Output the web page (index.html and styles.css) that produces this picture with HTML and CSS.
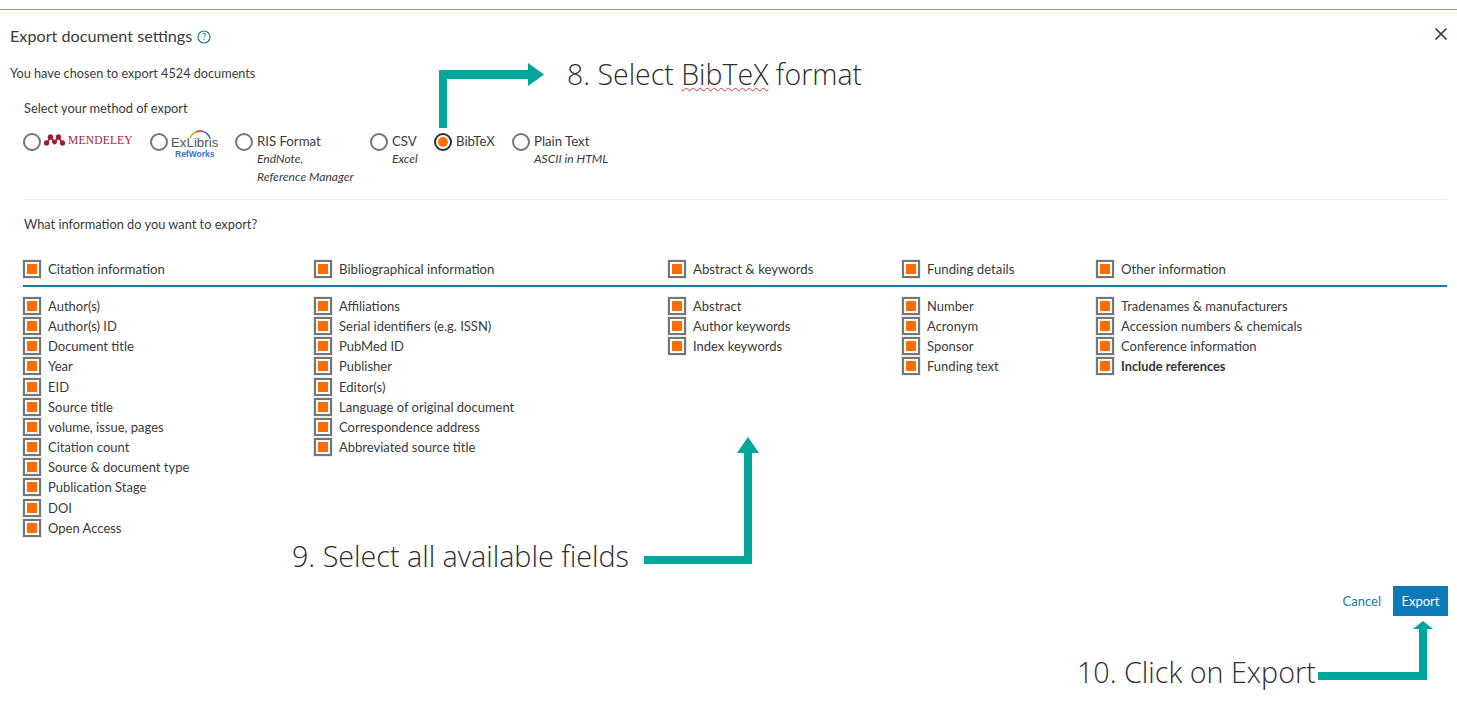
FILE: index.html
```html
<!DOCTYPE html>
<html lang="en">
<head>
<meta charset="utf-8">
<title>Export document settings</title>
<link rel="stylesheet" href="styles.css">
</head>
<body>
<div class="topline"></div>
<main class="dialog">
  <header class="head">
    <h1 class="title">Export document settings</h1>
    <svg class="help" width="14" height="14" viewBox="0 0 14 14"><circle cx="7" cy="7" r="6" fill="none" stroke="#1a7fa5" stroke-width="1.2"/><text x="7" y="10.2" text-anchor="middle" class="help-q">?</text></svg>
    <svg class="close" width="14" height="14" viewBox="0 0 14 14"><path d="M1.500 1.500L12.500 12.500M12.500 1.500L1.500 12.500" stroke="#2e3a4a" stroke-width="1.7" fill="none"/></svg>
  </header>
  <p class="count">You have chosen to export 4524 documents</p>
  <section class="method">
    <p class="label">Select your method of export</p>
    <div class="radios">
      <div class="radio r-men">
        <span class="dot"></span>
        <span class="men-logo">
          <svg width="21" height="12" viewBox="0 0 21 12"><g fill="#9b1c2e" stroke="#9b1c2e"><path d="M2.500 9L6.500 3.500L10.500 8L14.500 3.500L18.500 9" fill="none" stroke-width="1.6"/><circle cx="2.500" cy="9" r="2.300"/><circle cx="6.500" cy="3" r="2.300"/><circle cx="10.500" cy="8" r="2"/><circle cx="14.500" cy="3" r="2.300"/><circle cx="18.500" cy="9" r="2.300"/></g></svg>
          <span class="men-text">MENDELEY</span>
        </span>
      </div>
      <div class="radio r-ex">
        <span class="dot"></span>
        <span class="ex-logo">
          <svg class="arc" width="24" height="9" viewBox="0 0 24 9"><path d="M2 8A10 10 0 0 1 8 2" stroke="#e2a21f" stroke-width="1.5" fill="none"/><path d="M8 2A10 10 0 0 1 13 1" stroke="#d8352a" stroke-width="1.5" fill="none"/><path d="M13 1A10 10 0 0 1 18 3" stroke="#7a3fa0" stroke-width="1.5" fill="none"/><path d="M18 3A10 10 0 0 1 22 8" stroke="#2a6fd0" stroke-width="1.5" fill="none"/></svg>
          <span class="ex-text">ExLibris</span>
          <span class="ex-sub">RefWorks</span>
        </span>
      </div>
      <div class="radio r-ris">
        <span class="dot"></span>
        <span class="opt">RIS Format<em>EndNote,<br>Reference Manager</em></span>
      </div>
      <div class="radio r-csv">
        <span class="dot"></span>
        <span class="opt">CSV<em>Excel</em></span>
      </div>
      <div class="radio r-bib">
        <span class="dot on"></span>
        <span class="opt">BibTeX</span>
      </div>
      <div class="radio r-txt">
        <span class="dot"></span>
        <span class="opt">Plain Text<em>ASCII in HTML</em></span>
      </div>
    </div>
  </section>
  <section class="fields">
    <p class="label">What information do you want to export?</p>
    <div class="grid heads">
      <div class="item"><span class="box"></span>Citation information</div>
      <div class="item"><span class="box"></span>Bibliographical information</div>
      <div class="item"><span class="box"></span>Abstract &amp; keywords</div>
      <div class="item"><span class="box"></span>Funding details</div>
      <div class="item"><span class="box"></span>Other information</div>
    </div>
    <div class="grid lists">
      <ul class="col">
        <li class="item"><span class="box"></span>Author(s)</li>
        <li class="item"><span class="box"></span>Author(s) ID</li>
        <li class="item"><span class="box"></span>Document title</li>
        <li class="item"><span class="box"></span>Year</li>
        <li class="item"><span class="box"></span>EID</li>
        <li class="item"><span class="box"></span>Source title</li>
        <li class="item"><span class="box"></span>volume, issue, pages</li>
        <li class="item"><span class="box"></span>Citation count</li>
        <li class="item"><span class="box"></span>Source &amp; document type</li>
        <li class="item"><span class="box"></span>Publication Stage</li>
        <li class="item"><span class="box"></span>DOI</li>
        <li class="item"><span class="box"></span>Open Access</li>
      </ul>
      <ul class="col">
        <li class="item"><span class="box"></span>Affiliations</li>
        <li class="item"><span class="box"></span>Serial identifiers (e.g. ISSN)</li>
        <li class="item"><span class="box"></span>PubMed ID</li>
        <li class="item"><span class="box"></span>Publisher</li>
        <li class="item"><span class="box"></span>Editor(s)</li>
        <li class="item"><span class="box"></span>Language of original document</li>
        <li class="item"><span class="box"></span>Correspondence address</li>
        <li class="item"><span class="box"></span>Abbreviated source title</li>
      </ul>
      <ul class="col">
        <li class="item"><span class="box"></span>Abstract</li>
        <li class="item"><span class="box"></span>Author keywords</li>
        <li class="item"><span class="box"></span>Index keywords</li>
      </ul>
      <ul class="col">
        <li class="item"><span class="box"></span>Number</li>
        <li class="item"><span class="box"></span>Acronym</li>
        <li class="item"><span class="box"></span>Sponsor</li>
        <li class="item"><span class="box"></span>Funding text</li>
      </ul>
      <ul class="col">
        <li class="item"><span class="box"></span>Tradenames &amp; manufacturers</li>
        <li class="item"><span class="box"></span>Accession numbers &amp; chemicals</li>
        <li class="item"><span class="box"></span>Conference information</li>
        <li class="item strong"><span class="box"></span>Include references</li>
      </ul>
    </div>
  </section>
  <footer class="actions">
    <a class="cancel">Cancel</a>
    <button class="export">Export</button>
  </footer>
</main>

<div class="callout c8">8. Select <span class="spell">BibTeX</span> format</div>
<div class="callout c9">9. Select all available fields</div>
<div class="callout c10">10. Click on Export</div>

<svg class="arrows" width="1457" height="707" viewBox="0 0 1457 707">
  <g fill="#00a59b">
    <path d="M439 128V70H528V63L544 74.500L528 86V79H447V128Z"/>
    <path d="M644 556H744V453H737L748 437L759 453H752V564H644Z"/>
    <path d="M1318 672H1419V629H1413L1423 621L1433 629H1427V680H1318Z"/>
  </g>
</svg>
</body>
</html>
```
FILE: styles.css
```css
* { box-sizing: border-box; }
html, body { margin: 0; padding: 0; }
body {
  width: 1457px;
  height: 707px;
  overflow: hidden;
  background: #fff;
  color: #3a3a3a;
  font-family: "Lato", "Open Sans", sans-serif;
  font-size: 13px;
  position: relative;
}
p, h1, ul { margin: 0; padding: 0; }
ul { list-style: none; }

.topline { height: 1px; margin-top: 9px; background: #e88440; }

.dialog { padding: 0 10px; }

.head { display: flex; align-items: center; height: 40px; gap: 5px; padding-top: 11px; }
.title { font-size: 16.200px; font-weight: 400; color: #3a3a3a; line-height: 26px; }
.help { margin-top: 2px; }
.help-q { font-size: 10px; fill: #1a7fa5; font-family: "Lato", sans-serif; }
.close { margin-left: auto; margin-right: -1px; margin-top: -4px; }

.count { margin-top: 13px; line-height: 20px; font-size: 12.700px; }

.method { margin-left: 14px; margin-top: 15px; height: 102px; border-bottom: 1px solid #ececec; }
.label { line-height: 20px; font-size: 12.800px; }

.radios { display: flex; margin-top: 13px; margin-left: -1px; }
.radio { display: flex; align-items: flex-start; }
.dot {
  width: 18px; height: 18px; flex: none;
  border: 2px solid #757575; border-radius: 50%;
  background: #fff;
  margin-top: 2px;
}
.dot.on {
  border-color: #2e2e2e;
  padding: 2px;
  background: #ff6c00 content-box;
}
.opt { margin-left: 4px; line-height: 18px; padding-top: 1px; font-size: 13.200px; white-space: nowrap; }
.opt em { display: block; font-size: 12.100px; line-height: 17.500px; }

.r-men { width: 127px; }
.r-ex { width: 85px; }
.r-ris { width: 135px; }
.r-csv { width: 64px; }
.r-bib { width: 78px; }

.men-logo { display: flex; align-items: center; gap: 3px; margin-left: 3px; margin-top: 2px; height: 14px; }
.men-text { font-family: "Liberation Serif", serif; color: #a3223a; font-size: 11.500px; letter-spacing: .2px; line-height: 14px; }

.ex-logo { position: relative; display: block; width: 46px; height: 30px; margin-left: 3px; }
.arc { position: absolute; left: 17px; top: -1px; }
.ex-text { position: absolute; left: 0; top: 4px; font-family: "Liberation Sans", sans-serif; font-size: 13.300px; color: #555; white-space: nowrap; }
.ex-sub { position: absolute; left: 4px; top: 18px; font-family: "Liberation Sans", sans-serif; font-size: 8.500px; font-weight: 700; color: #3a6fd8; white-space: nowrap; }

.fields { margin-top: 14px; margin-left: 13px; }
.fields > .label { padding-left: 1px; }

.grid { display: grid; grid-template-columns: 291px 354px 234px 194px 1fr; }
.heads { margin-top: 25px; border-bottom: 2px solid #1a7a9c; height: 28px; font-size: 13.200px; }
.lists { margin-top: 8.700px; }

.item { display: flex; align-items: center; height: 20.200px; line-height: 20px; white-space: nowrap; }
.heads .item { height: 20px; }
.strong { font-weight: 700; color: #333; font-size: 12.800px; }

.box {
  width: 18px; height: 18px; flex: none;
  margin-right: 7px;
  border: 2px solid #757575;
  padding: 2px;
  background: #ff6c00 content-box;
  box-shadow: 0 0 0 1px #ececec;
}

.actions { display: flex; justify-content: flex-end; align-items: center; gap: 12px; position: absolute; top: 586px; right: 9px; }
.cancel { color: #1a7a9c; }
.export { width: 55px; height: 30px; border: 0; background: #0c7ab8; color: #fff; font: 13px "Lato", sans-serif; padding: 0; }

.callout { position: absolute; font-family: "Open Sans", sans-serif; font-weight: 300; font-size: 28.700px; color: #2e2e2e; white-space: nowrap; line-height: 40px; }
.c8 { left: 567px; top: 54px; font-size: 28.500px; }
.c9 { left: 292px; top: 536px; }
.c10 { left: 1077px; top: 652px; }
.spell { text-decoration: underline wavy #d8343a 1px; text-underline-offset: 2px; }

.arrows { position: absolute; left: 0; top: 0; pointer-events: none; }
```
